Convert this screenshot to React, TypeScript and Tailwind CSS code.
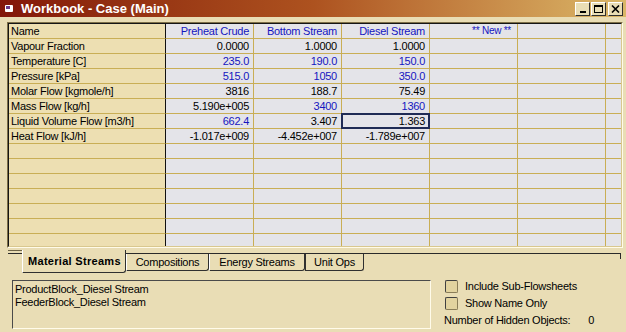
import React from "react";

type Val = [string, boolean];
const rows: { name: string; v: Val[] }[] = [
  { name: "Vapour Fraction", v: [["0.0000", false], ["1.0000", false], ["1.0000", false]] },
  { name: "Temperature [C]", v: [["235.0", true], ["190.0", true], ["150.0", true]] },
  { name: "Pressure [kPa]", v: [["515.0", true], ["1050", true], ["350.0", true]] },
  { name: "Molar Flow [kgmole/h]", v: [["3816", false], ["188.7", false], ["75.49", false]] },
  { name: "Mass Flow [kg/h]", v: [["5.190e+005", false], ["3400", true], ["1360", true]] },
  { name: "Liquid Volume Flow [m3/h]", v: [["662.4", true], ["3.407", false], ["1.363", false]] },
  { name: "Heat Flow [kJ/h]", v: [["-1.017e+009", false], ["-4.452e+007", false], ["-1.789e+007", false]] },
];

const headers = ["Preheat Crude", "Bottom Stream", "Diesel Stream", "** New **", ""];

function Cell({
  text,
  blue,
  selected,
}: {
  text: string;
  blue?: boolean;
  selected?: boolean;
}) {
  return (
    <div
      className={`relative w-[88px] h-[15px] shrink-0 border-r border-b border-[#c9ae55] bg-[#e4e4e9] text-right pr-[4px] leading-[14px] ${
        blue ? "text-[#1515c0]" : "text-black"
      }`}
    >
      {text}
      {selected && (
        <div className="absolute left-[-1px] top-[-1px] right-[-1px] bottom-[-1px] border-2 border-[#1f2b55]" />
      )}
    </div>
  );
}

function NameCell({ text }: { text: string }) {
  return (
    <div className="w-[157px] h-[15px] shrink-0 border-r border-r-[#111] border-b border-b-[#c9ae55] bg-[#eddfb2] pl-[2px] leading-[14px] text-black">
      {text}
    </div>
  );
}

function TitleButton({ children }: { children: React.ReactNode }) {
  return (
    <div className="w-[15px] h-[14px] bg-[#e9ddb5] border border-t-white border-l-white border-r-[#303030] border-b-[#303030] flex items-center justify-center">
      {children}
    </div>
  );
}

function Checkbox() {
  return (
    <div className="w-[13px] h-[13px] rounded-[2px] border border-t-[#404040] border-l-[#404040] border-r-[#8a7d58] border-b-[#8a7d58] bg-[#e2d39f] shrink-0" />
  );
}

export default function App() {
  const emptyRows = Array.from({ length: 8 });
  return (
    <div className="w-[626px] h-[332px] overflow-hidden bg-[#e9ddb5] font-['Liberation_Sans',Arial,sans-serif] text-[11px] tracking-[-0.25px] text-black flex flex-col">
      {/* Title bar */}
      <div className="h-[17px] shrink-0 bg-gradient-to-r from-[#831609] via-[#ad521f] to-[#dab768] flex items-center">
        <div className="ml-[5px] w-[8px] h-[7px] bg-white rounded-[1px] flex items-start justify-start">
          <div className="w-[4px] h-[3px] bg-[#6a3a8a] mt-[1px] ml-[1px]" />
        </div>
        <div className="ml-[8px] text-white font-bold text-[13px] tracking-normal leading-none">
          Workbook - Case (Main)
        </div>
        <div className="ml-auto mr-[3px] flex items-center">
          <TitleButton>
            <div className="w-[6px] h-[2px] bg-black mt-[6px]" />
          </TitleButton>
          <div className="w-[1px]" />
          <TitleButton>
            <div className="w-[9px] h-[8px] border border-black border-t-2" />
          </TitleButton>
          <div className="w-[2px]" />
          <TitleButton>
            <svg width="9" height="8" viewBox="0 0 9 8">
              <path d="M1 0.5 L8 7.5 M8 0.5 L1 7.5" stroke="black" strokeWidth="1.6" />
            </svg>
          </TitleButton>
        </div>
      </div>

      {/* Grid */}
      <div className="mt-[5px] ml-[7px] w-[616px] h-[226px] shrink-0 border border-t-[#7d6f48] border-l-[#7d6f48] border-r-[#fffbea] border-b-[#fffbea]">
        <div className="w-full h-full overflow-hidden border border-t-[#151515] border-l-[#151515] border-r-[#d9c88f] border-b-[#d9c88f] bg-[#e4e4e9]">
          {/* header */}
          <div className="flex">
            <NameCell text="Name" />
            {headers.map((h, i) => (
              <div
                key={i}
                className={`w-[88px] h-[15px] shrink-0 border-r border-b border-[#c9ae55] bg-[#e4e4e9] text-right leading-[14px] text-[#1515c0] ${
                  i === 3 ? "pr-[6px] text-[10px]" : "pr-[4px]"
                }`}
              >
                {h}
              </div>
            ))}
            <div className="flex-1 h-[15px] border-b border-[#c9ae55]" />
          </div>
          {rows.map((r, ri) => (
            <div className="flex" key={ri}>
              <NameCell text={r.name} />
              {r.v.map((v, ci) => (
                <Cell key={ci} text={v[0]} blue={v[1]} selected={ri === 5 && ci === 2} />
              ))}
              <Cell text="" />
              <Cell text="" />
              <div className="flex-1 h-[15px] border-b border-[#c9ae55]" />
            </div>
          ))}
          {emptyRows.map((_, ri) => (
            <div className="flex" key={"e" + ri}>
              <NameCell text="" />
              <Cell text="" />
              <Cell text="" />
              <Cell text="" />
              <Cell text="" />
              <Cell text="" />
              <div className="flex-1 h-[15px] border-b border-[#c9ae55]" />
            </div>
          ))}
        </div>
      </div>

      {/* Tabs */}
      <div className="mt-[2px] ml-[8px] w-[613px] h-[23px] shrink-0 flex items-start">
        <div className="w-[14px] h-[4px] border-t border-t-[#6e6346] border-b border-b-[#2a2a2a]" />
        <div className="w-[104px] h-[23px] shrink-0 border-l border-l-white border-r border-r-[#303030] border-b border-b-[#303030] rounded-br-[3px] flex items-center pl-[5px] pt-[1px] font-bold tracking-[0.3px]">
          Material Streams
        </div>
        <div className="mt-[3px] flex border-t border-t-[#2a2a2a]">
          <div className="w-[83px] h-[17px] border-l border-l-white border-r border-r-[#303030] border-b border-b-[#303030] rounded-br-[3px] flex items-center justify-center">
            Compositions
          </div>
          <div className="w-[96px] h-[17px] border-l border-l-white border-r border-r-[#303030] border-b border-b-[#303030] rounded-br-[3px] flex items-center justify-center">
            Energy Streams
          </div>
          <div className="w-[59px] h-[17px] border-l border-l-[#303030] border-r border-r-[#303030] border-b border-b-[#303030] rounded-br-[3px] flex items-center justify-center">
            Unit Ops
          </div>
        </div>
        <div className="mt-[3px] flex-1 h-[6px] border-t border-t-[#2a2a2a] border-r border-r-[#2a2a2a]" />
      </div>

      {/* Content */}
      <div className="flex items-start">
        <div className="mt-[7px] ml-[12px] w-[419px] h-[49px] shrink-0 border border-t-[#4a4a4a] border-l-[#4a4a4a] border-r-[#fffbea] border-b-[#fffbea] pl-[2px] pt-[2px] leading-[13px]">
          <div>ProductBlock_Diesel Stream</div>
          <div>FeederBlock_Diesel Stream</div>
        </div>
        <div className="ml-[14px] mt-[5px] flex flex-col w-[170px]">
          <div className="flex items-center h-[17px]">
            <Checkbox />
            <span className="ml-[7px]">Include Sub-Flowsheets</span>
          </div>
          <div className="flex items-center h-[17px]">
            <Checkbox />
            <span className="ml-[7px]">Show Name Only</span>
          </div>
          <div className="flex items-center h-[16px] -ml-[1px]">
            <span>Number of Hidden Objects:</span>
            <span className="ml-auto mr-[21px]">0</span>
          </div>
        </div>
      </div>
    </div>
  );
}
